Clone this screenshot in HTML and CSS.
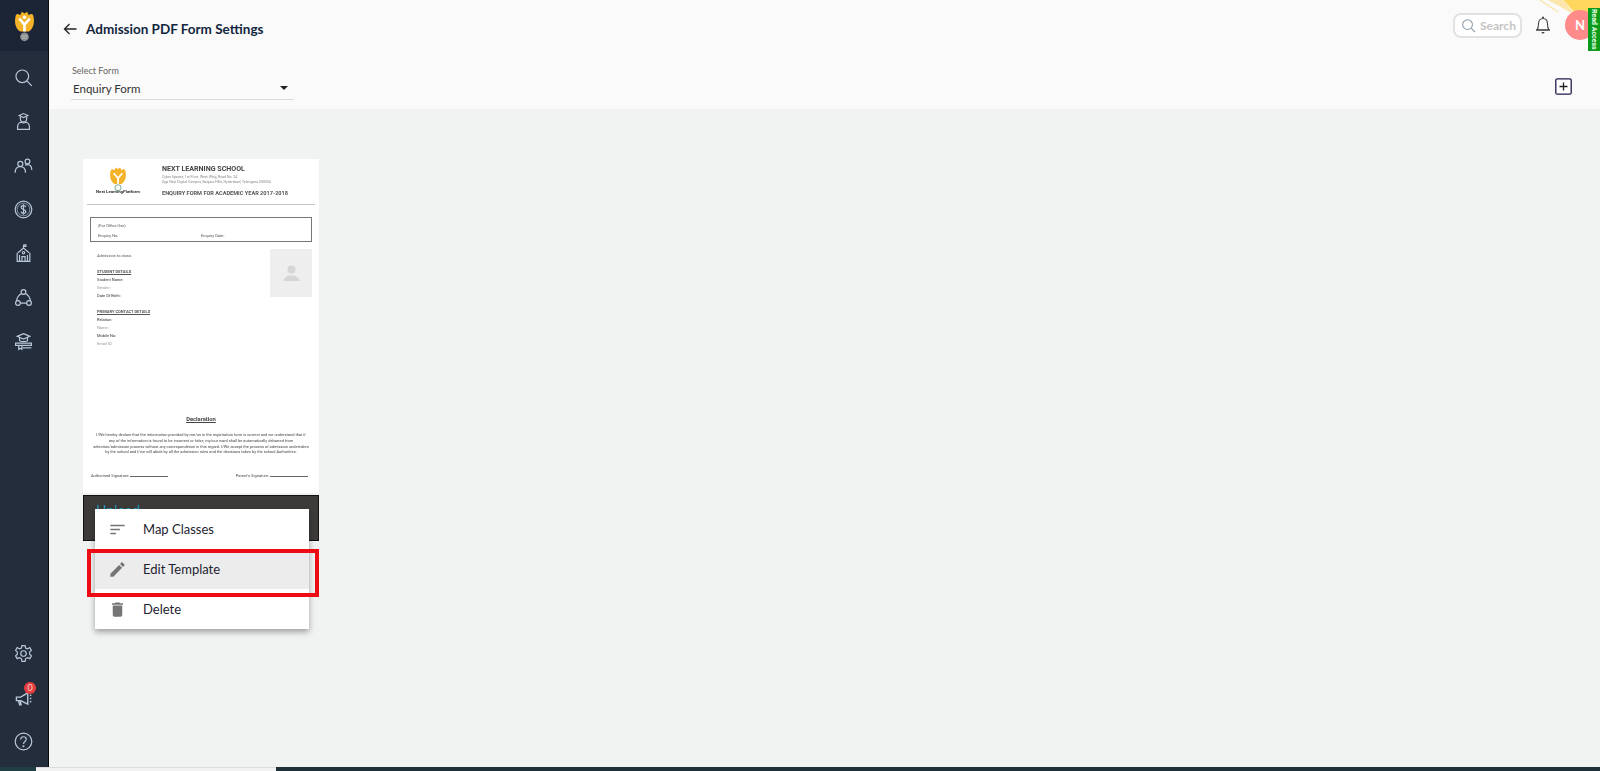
FILE: index.html
```html
<!DOCTYPE html>
<html lang="en">
<head>
  <meta charset="UTF-8" />
  <title>Admission PDF Form Settings</title>
  <link rel="stylesheet" href="styles.css">
</head>
<body>
  <div class="app">
    <aside class="sidebar">
      <div class="brand">
        <svg width="21" height="32" viewBox="0 0 24 37">
          <path d="M2 6 C3 4 5 4 7 6 L9 2 L12 4 L15 2 L17 6 C19 4 21 4 22 6 C24 13 23 21 17 25 L7 25 C1 21 0 13 2 6 Z" fill="#f5b32a"/>
          <path d="M6 10 L12 17 L18 10 M12 17 L12 25" fill="none" stroke="#fff" stroke-width="3"/>
          <circle cx="12" cy="8.500" r="2" fill="#fff"/>
          <circle cx="12" cy="31" r="5" fill="#8d8f90"/>
          <path d="M8.500 30h7M8.500 32.500h7" stroke="#c9c9c9" stroke-width="0.800"/>
        </svg>
      </div>
      <nav class="nav">
        <a class="nav-item"><svg class="ico" viewBox="0 0 24 24"><circle cx="10.500" cy="10.500" r="8"/><path d="M16.500 16.500l6 6"/></svg></a>
        <a class="nav-item"><svg class="ico" viewBox="0 0 24 24"><path d="M6.500 4.500L12 2l5.500 2.500L12 7z"/><path d="M8 6v2.500a4 4 0 0 0 8 0V6"/><path d="M8.500 13C5.500 14 4.500 16 4.500 19v3h15v-3c0-3-1-5-4-6-2.300 1-4.700 1-7 0z"/></svg></a>
        <a class="nav-item"><svg class="ico" viewBox="0 0 24 24"><circle cx="8" cy="10" r="3.200"/><circle cx="17" cy="7" r="3"/><path d="M1.500 21c0-5 2.500-7.500 6.500-7.500s6.500 2.500 6.500 7.500"/><path d="M14 11.500c1-.5 2-.7 3-.7 3.500 0 5.500 2.500 5.500 7"/></svg></a>
        <a class="nav-item"><svg class="ico" viewBox="0 0 24 24"><circle cx="12" cy="12" r="10.500"/><circle cx="12" cy="12" r="8" stroke-width="0.800"/><path d="M15 9c-.5-1.200-1.500-1.800-3-1.800-2 0-3 1-3 2.300 0 3.200 6 1.800 6 5 0 1.300-1.200 2.300-3 2.300-1.600 0-2.700-.6-3.200-1.900M12 5.500v13"/></svg></a>
        <a class="nav-item"><svg class="ico" viewBox="0 0 24 24"><path d="M12 1v4"/><path d="M12 1h3v2h-3"/><path d="M5 11l7-6 7 6"/><path d="M4 11v11h16V11"/><path d="M10 22v-6h4v6"/><circle cx="12" cy="11" r="1.500"/><path d="M7 14v8M17 14v8"/></svg></a>
        <a class="nav-item"><svg class="ico" viewBox="0 0 24 24"><circle cx="12" cy="5" r="3"/><circle cx="5" cy="19" r="3"/><circle cx="19" cy="19" r="3"/><path d="M9.500 7C6 9 3.500 12.500 3.500 16.300M14.500 7c3.500 2 6 5.500 6 9.300M8 19h8"/></svg></a>
        <a class="nav-item"><svg class="ico" viewBox="0 0 24 24"><path d="M12 2l8 3.500-8 3.500-8-3.500z"/><path d="M7 7v4c3 1.500 7 1.500 10 0V7"/><path d="M2 14h20v3H2z"/><path d="M6 17v5l2-1.500L10 22v-5"/><path d="M22 20H11"/></svg></a>
      </nav>
      <div class="nav nav-bottom">
        <a class="nav-item"><svg class="ico" viewBox="0 0 24 24"><circle cx="12" cy="12" r="3.500"/><path d="M10 2h4l.6 3 2.600 1.100L20 4.500 22 8l-2.300 2 .1 2.800L22 15l-2 3.500-2.800-1.300-2.600 1.500L14 22h-4l-.6-3.300-2.600-1.500L4 18.500 2 15l2.200-2.200V10L2 8l2-3.500 2.800 1.600L9.400 5z"/></svg></a>
        <a class="nav-item"><svg class="ico ico-small" viewBox="0 0 24 24"><path d="M2 10h6l10-6v16L8 15H2z"/><path d="M5 15l1.500 6h2L7.500 15"/><path d="M21 8l2-1M21 12h2M21 16l2 1"/></svg><span class="badge">0</span></a>
        <a class="nav-item"><svg class="ico" viewBox="0 0 24 24"><circle cx="12" cy="12" r="10.500"/><path d="M8.500 9.500C8.500 7.500 10 6 12 6s3.500 1.400 3.500 3.200c0 2.800-3.500 3-3.500 6"/><circle cx="12" cy="18" r="0.600"/></svg></a>
      </div>
    </aside>

    <div class="content">
      <header class="topbar">
        <div class="title-row">
          <svg class="back" width="14" height="14" viewBox="0 0 14 14"><path d="M13.500 7H1.500M6.500 2L1.500 7l5 5" fill="none" stroke="#222" stroke-width="1.300"/></svg>
          <h1 class="page-title">Admission PDF Form Settings</h1>
          <div class="top-actions">
            <div class="search">
              <svg width="15" height="15" viewBox="0 0 16 16"><circle cx="7" cy="7" r="5.200" fill="none" stroke="#8a97a8" stroke-width="1.100"/><path d="M11 11l4 4" stroke="#8a97a8" stroke-width="1.100"/></svg>
              <span>Search</span>
            </div>
            <svg class="bell" width="16" height="20" viewBox="0 0 16 20"><path d="M2 15c1-1.500 1.500-2.500 1.500-6 0-3.500 2-5.500 4.500-5.500s4.500 2 4.500 5.500c0 3.500.5 4.500 1.500 6z" fill="none" stroke="#444" stroke-width="1.100"/><path d="M1 15h14" stroke="#444" stroke-width="1.200"/><circle cx="8" cy="2.500" r="1" fill="#444"/><path d="M6.500 17h3a1.500 1.500 0 0 1-3 0z" fill="#444"/></svg>
            <div class="avatar">N</div>
          </div>
        </div>
        <div class="select-row">
          <div class="select">
            <label class="select-label">Select Form</label>
            <div class="select-value">Enquiry Form <span class="caret"></span></div>
          </div>
          <svg class="add" width="17" height="17" viewBox="0 0 17 17"><rect x="0.800" y="0.800" width="15.400" height="15.400" rx="1.500" fill="#fff" stroke="#1f1b4d" stroke-width="1.300"/><path d="M8.500 4.500v8M4.500 8.500h8" stroke="#222" stroke-width="1.300"/></svg>
        </div>
      </header>

      <main class="main">
        <div class="template">
          <div class="doc">
            <div class="doc-head">
              <div class="doc-logo">
                <svg width="18" height="26" viewBox="0 0 24 36">
                  <path d="M2 6 C3 4 5 4 7 6 L9 2 L12 4 L15 2 L17 6 C19 4 21 4 22 6 C24 13 23 21 17 25 L7 25 C1 21 0 13 2 6 Z" fill="#f5b32a"/>
                  <path d="M6 10 L12 17 L18 10 M12 17 L12 25" fill="none" stroke="#fff" stroke-width="2.400"/>
                  <circle cx="12" cy="30" r="4" fill="none" stroke="#8fb8a0" stroke-width="1.500"/>
                </svg>
                <span class="doc-brand">Next LearningPlatform</span>
              </div>
              <div class="doc-school">
                <div class="school-name">NEXT LEARNING SCHOOL</div>
                <div class="school-addr">Cyber Spaces, 1st Floor, West Wing, Road No. 24</div>
                <div class="school-addr">Opp Next Digital Campus, Banjara Hills, Hyderabad, Telangana 500034</div>
                <div class="school-form">ENQUIRY FORM FOR ACADEMIC YEAR 2017-2018</div>
              </div>
            </div>
            <div class="office-box">
              <div>(For Office Use)</div>
              <div class="office-row"><span>Enquiry No:</span><span>Enquiry Date:</span></div>
            </div>
            <div class="doc-body">
              <div class="doc-fields">
                <div class="field-first">Admission to class:</div>
                <div class="field-head">STUDENT DETAILS</div>
                <div class="field">Student Name:</div>
                <div class="field field-light">Gender:</div>
                <div class="field">Date Of Birth:</div>
                <div class="field-head">PRIMARY CONTACT DETAILS</div>
                <div class="field">Relation:</div>
                <div class="field field-light">Name:</div>
                <div class="field">Mobile No:</div>
                <div class="field field-light">Email ID:</div>
              </div>
              <div class="photo">
                <svg width="17" height="17" viewBox="0 0 17 17"><circle cx="8.500" cy="4.500" r="4" fill="#d6d6d6"/><path d="M0.500 16c0-3.500 3.500-5.500 8-5.500s8 2 8 5.500z" fill="#d6d6d6"/></svg>
              </div>
            </div>
            <div class="declaration">Declaration</div>
            <p class="declare-text">I/We hereby declare that the information provided by me/us in the registration form is correct and we understand that if<br>any of the information is found to be incorrect or false, my/our ward shall be automatically debarred from<br>selection/admission process without any correspondence in this regard. I/We accept the process of admission undertaken<br>by the school and I/we will abide by all the admission rules and the decisions taken by the school Authorities.</p>
            <div class="signs">
              <span class="sign">Authorised Signature: <i class="sign-line"></i></span>
              <span class="sign">Parent's Signature: <i class="sign-line"></i></span>
            </div>
          </div>
          <div class="template-bar"><span class="bar-text">Upload</span></div>

          <ul class="menu">
            <li class="menu-item">
              <svg class="menu-ico" viewBox="0 0 24 24"><path d="M3 6h18v2H3zM3 11h12v2H3zM3 16h7v2H3z" fill="#757575"/></svg>
              Map Classes
            </li>
            <li class="menu-item menu-item-active">
              <svg class="menu-ico" viewBox="0 0 24 24"><path d="M3 17.250V21h3.750L17.810 9.940l-3.750-3.750L3 17.250zM20.710 7.040a1 1 0 0 0 0-1.410l-2.340-2.340a1 1 0 0 0-1.410 0l-1.830 1.830 3.750 3.750 1.830-1.830z" fill="#757575"/></svg>
              Edit Template
            </li>
            <li class="menu-item">
              <svg class="menu-ico" viewBox="0 0 24 24"><path d="M6 19c0 1.100.9 2 2 2h8c1.100 0 2-.9 2-2V7H6v12zM19 4h-3.500l-1-1h-5l-1 1H5v2h14V4z" fill="#757575"/></svg>
              Delete
            </li>
          </ul>
          <div class="highlight"></div>
        </div>
      </main>
    </div>
  </div>

  <svg class="ribbon" width="62" height="24" viewBox="0 0 62 24"><path d="M25 0h37v22H46z" fill="#ffd75e"/><path d="M10 0h15l14 16z" fill="#fbe6ab"/><path d="M2 0l18 12" stroke="#fbe6ab" stroke-width="1.500"/></svg>
  <div class="read-access">Read Access</div>

  <div class="taskbar">
    <span class="task-a"></span><span class="task-b"></span><span class="task-c"></span>
  </div>
</body>
</html>
```

FILE: styles.css
```css
* {
  box-sizing: border-box;
}

html,
body {
  margin: 0;
  height: 100%;
  overflow: hidden;
}

body {
  font-family: Lato, "Noto Sans", sans-serif;
  background-color: #f1f3f2;
  color: #222;
}

.app {
  display: flex;
  height: 771px;
}

/* sidebar */
.sidebar {
  width: 49px;
  flex-shrink: 0;
  display: flex;
  flex-direction: column;
  background-color: #232d3b;
  border-right: 1px solid #0a0a0a;
}

.brand {
  height: 51px;
  display: flex;
  align-items: center;
  justify-content: center;
  background-color: #1b2535;
}

.nav {
  display: flex;
  flex-direction: column;
  padding-top: 4px;
}

.nav-bottom {
  margin-top: auto;
  padding-top: 0;
  padding-bottom: 8px;
}

.nav-item {
  position: relative;
  height: 44px;
  display: flex;
  align-items: center;
  justify-content: center;
  padding-right: 2px;
}

.ico {
  width: 19px;
  height: 19px;
  fill: none;
  stroke: #b9c8d8;
  stroke-width: 1.500;
}

.ico-small {
  width: 17px;
  height: 17px;
  margin-top: 3px;
  stroke-width: 2;
}

.badge {
  position: absolute;
  top: 7px;
  left: 24px;
  width: 12px;
  height: 12px;
  border-radius: 50%;
  background-color: #e53e3e;
  color: #f6caca;
  font-size: 9px;
  line-height: 12px;
  text-align: center;
}

/* header */
.content {
  flex: 1;
  display: flex;
  flex-direction: column;
  min-width: 0;
}

.topbar {
  height: 109px;
  background-color: #fafafa;
  flex-shrink: 0;
}

.title-row {
  height: 58px;
  display: flex;
  align-items: center;
  padding-left: 14px;
}

.back {
  margin-right: 9px;
}

.page-title {
  margin: 0;
  font-size: 13.500px;
  font-weight: 700;
  color: #12263f;
}

.top-actions {
  margin-left: auto;
  display: flex;
  align-items: center;
  align-self: flex-start;
  height: 50px;
}

.search {
  width: 69px;
  height: 25px;
  display: flex;
  align-items: center;
  gap: 4px;
  padding-left: 6px;
  border: 2px solid #e2e2e2;
  border-radius: 8px;
  background-color: #fff;
  color: #c4c4c4;
  font-size: 12px;
  font-weight: 700;
}

.bell {
  margin-left: 13px;
}

.avatar {
  width: 30px;
  height: 30px;
  margin-left: 14px;
  margin-right: 5px;
  border-radius: 50%;
  background-color: #ff8a8a;
  color: #fff;
  font-size: 13px;
  font-weight: 700;
  line-height: 30px;
  text-align: center;
  position: relative;
  z-index: 2;
}

.select-row {
  display: flex;
  align-items: center;
  justify-content: space-between;
  padding: 7px 28px 0 22px;
}

.select {
  width: 223px;
}

.select-label {
  display: block;
  padding-left: 1px;
  font-size: 9px;
  color: #666;
  line-height: 12px;
}

.select-value {
  position: relative;
  height: 23px;
  padding: 5px 0 0 2px;
  font-size: 11.500px;
  color: #333;
  border-bottom: 1px solid #dcdcdc;
}

.caret {
  position: absolute;
  right: 6px;
  top: 9px;
  border-left: 4px solid transparent;
  border-right: 4px solid transparent;
  border-top: 4px solid #222;
}

.add {
  margin-top: 8px;
}

/* template card */
.main {
  flex: 1;
  padding: 50px 0 0 34px;
}

.template {
  position: relative;
  width: 236px;
}

.doc {
  height: 334px;
  padding: 7px 4px 0;
  background-color: #fff;
  font-family: Roboto, "Liberation Sans", sans-serif;
  font-size: 4px;
  color: #555;
  filter: blur(0.3px);
}

.doc-head {
  display: flex;
  border-bottom: 1px solid #c4c4c4;
  height: 39px;
}

.doc-logo {
  width: 62px;
  margin-right: 13px;
  display: flex;
  flex-direction: column;
  align-items: center;
}

.doc-brand {
  margin-top: -3px;
  font-size: 4.300px;
  font-weight: 700;
  color: #333;
  white-space: nowrap;
}

.school-name {
  font-size: 7.100px;
  font-weight: 700;
  color: #444;
  line-height: 8px;
  margin-top: -1px;
  margin-bottom: 2px;
}

.school-addr {
  font-size: 3.500px;
  line-height: 5px;
  color: #888;
}

.school-form {
  margin-top: 5px;
  font-size: 5.600px;
  font-weight: 700;
  color: #555;
  white-space: nowrap;
}

.office-box {
  height: 25px;
  margin: 12px 3px 0;
  padding: 5px 7px 0;
  border: 1px solid #777;
  line-height: 5px;
}

.office-row {
  display: flex;
  margin-top: 5px;
}

.office-row span {
  width: 112px;
}

.doc-body {
  display: flex;
  justify-content: space-between;
  padding: 7px 3px 0 10px;
}

.doc-fields {
  padding-top: 3px;
  line-height: 8px;
}

.field-head {
  margin-top: 8px;
  font-weight: 700;
  text-decoration: underline;
}

.field {
  color: #333;
}

.field-light {
  color: #999;
}

.photo {
  width: 42px;
  height: 48px;
  display: flex;
  align-items: center;
  justify-content: center;
  background-color: #eeeeee;
}

.declaration {
  margin-top: 68px;
  font-size: 5.800px;
  font-weight: 700;
  text-align: center;
  text-decoration: underline;
  color: #444;
}

.declare-text {
  margin: 10px 0 0;
  font-size: 3.970px;
  line-height: 5.800px;
  text-align: center;
  color: #444;
  white-space: nowrap;
}

.signs {
  display: flex;
  justify-content: space-between;
  margin-top: 18px;
  padding: 0 7px 0 4px;
  color: #444;
}

.sign-line {
  display: inline-block;
  width: 38px;
  border-bottom: 1px solid #666;
}

.template-bar {
  height: 46px;
  margin-top: 2px;
  padding: 7px 12px;
  background-color: #3c3b39;
  border: 1px solid #111;
  color: #1aa3c9;
  font-size: 14px;
  line-height: 14px;
  overflow: hidden;
}

.bar-text {
  opacity: 0.9;
}

.menu {
  position: absolute;
  top: 350px;
  left: 12px;
  width: 214px;
  margin: 0;
  padding: 0;
  list-style: none;
  background-color: #fff;
  box-shadow: 0 3px 6px rgba(0, 0, 0, 0.35);
}

.menu-item {
  height: 40px;
  display: flex;
  align-items: center;
  gap: 16px;
  padding-left: 13px;
  font-size: 13px;
  color: #1d2330;
}

.menu-item-active {
  background-color: #ececec;
}

.menu-ico {
  width: 19px;
  height: 19px;
  flex-shrink: 0;
}

.highlight {
  position: absolute;
  top: 390px;
  left: 4px;
  width: 232px;
  height: 48px;
  border: 4px solid #ee0c14;
}

/* overlays at the corner of the window */
.ribbon {
  position: absolute;
  top: 0;
  right: 0;
}

.read-access {
  position: absolute;
  top: 8px;
  right: 0;
  z-index: 3;
  width: 12px;
  height: 43px;
  background-color: #0a9b1a;
  color: #e8ffe8;
  font-family: Roboto, sans-serif;
  font-size: 7px;
  font-weight: 700;
  line-height: 12px;
  text-align: center;
  writing-mode: vertical-rl;
  white-space: nowrap;
}

.taskbar {
  position: absolute;
  left: 0;
  right: 0;
  bottom: 0;
  height: 4px;
  display: flex;
  background-color: #1f2f38;
}

.task-a {
  width: 36px;
  background-color: #1f3f45;
}

.task-b {
  width: 240px;
  background-color: #f2f2f2;
  border-top: 1px solid #dcdcdc;
}

.task-c {
  flex: 1;
}
```
